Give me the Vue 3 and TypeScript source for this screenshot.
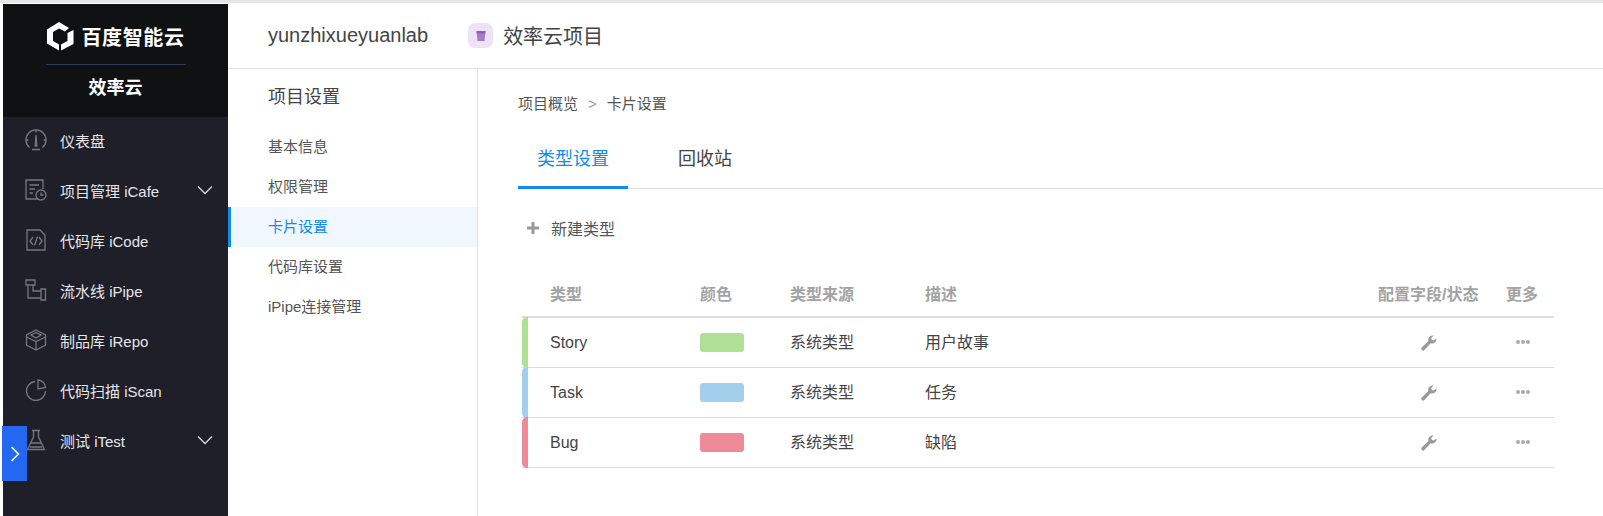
<script setup lang="ts">
interface MenuItem {
  label: string;
  icon: string;
  arrow?: boolean;
}

const menus: MenuItem[] = [
  { label: "仪表盘", icon: "gauge" },
  { label: "项目管理 iCafe", icon: "cafe", arrow: true },
  { label: "代码库 iCode", icon: "code" },
  { label: "流水线 iPipe", icon: "pipe" },
  { label: "制品库 iRepo", icon: "repo" },
  { label: "代码扫描 iScan", icon: "scan" },
  { label: "测试 iTest", icon: "test", arrow: true },
];

const settings = ["基本信息", "权限管理", "卡片设置", "代码库设置", "iPipe连接管理"];

const types = [
  { name: "Story", color: "#b0e096", desc: "用户故事" },
  { name: "Task", color: "#a3cfed", desc: "任务" },
  { name: "Bug", color: "#ef8b98", desc: "缺陷" },
];
</script>

<template>
  <div class="page">
    <aside class="sidebar">
      <div class="brand">
        <div class="logo">
          <svg width="27" height="29" viewBox="0 0 27 29">
            <path d="M12 0 L0 7.5 V21.5 L12 28.5 V22.5 L6 19 V10 L12 6.5 L18 9.5 L22 6 Z" fill="#fff" />
            <path d="M26.5 8 V22 L14 28.5 V22.5 L20.5 19 V11 Z" fill="#fff" />
          </svg>
          <span class="logo-text">百度智能云</span>
        </div>
        <div class="brand-line"></div>
        <div class="brand-name">效率云</div>
      </div>
      <nav class="menu">
        <div v-for="m in menus" :key="m.label" class="menu-item">
          <svg class="menu-icon" width="22" height="22" viewBox="0 0 22 22" fill="none" stroke="#77787d" stroke-width="1.3">
            <template v-if="m.icon === 'gauge'">
              <path d="M4.5 18.5 A10 10 0 1 1 17.5 18.5" />
              <path d="M11 6 L10.2 17 H11.8 Z M7 20.5 H15 M1 11 H3.5 M18.5 11 H21 M11 1 V3.5" />
            </template>
            <template v-else-if="m.icon === 'cafe'">
              <path d="M13 20 H1 V1 H18 V10" />
              <path d="M4.5 6 H14 M4.5 10 H10 M4.5 14 H8" />
              <circle cx="16" cy="16" r="5" />
              <path d="M16 13.5 V16 H18.5" />
            </template>
            <template v-else-if="m.icon === 'code'">
              <path d="M2 1 H15 L20 6 V21 H2 Z" />
              <path d="M8 8 L5 12 L8 16 M14 8 L17 12 L14 16 M12.5 7.5 L9.5 16.5" />
            </template>
            <template v-else-if="m.icon === 'pipe'">
              <path d="M1 1 H10 V6 H1 Z M3 6 V19 H16 M8 6 V12 H16 M16 10 H20.5 V21 H16 Z" />
            </template>
            <template v-else-if="m.icon === 'repo'">
              <path d="M11 1 L20.5 6 V16 L11 21 L1.5 16 V6 Z" />
              <path d="M1.5 8 L11 12.5 L20.5 8 M11 12.5 V21 M6 6 L11 3.5 L16 6 L11 9 Z" />
            </template>
            <template v-else-if="m.icon === 'scan'">
              <path d="M10 2.5 A9.5 9.5 0 1 0 20.5 12" />
              <path d="M13 1 A8 8 0 0 1 20.5 8.5 L13 10 Z" />
            </template>
            <template v-else>
              <path d="M7 1.5 H15 M8.5 1.5 V8 L2.5 20.5 H19.5 L13.5 8 V1.5" />
              <path d="M6 14 H16 M5 18 H17" />
            </template>
          </svg>
          <span class="menu-label">{{ m.label }}</span>
          <svg v-if="m.arrow" class="menu-arrow" width="16" height="10" viewBox="0 0 16 10" fill="none" stroke="#d8d8da" stroke-width="1.3">
            <path d="M1 1.5 L8 8.5 L15 1.5" />
          </svg>
        </div>
      </nav>
      <div class="toggle">
        <svg width="10" height="16" viewBox="0 0 10 16" fill="none" stroke="#fff" stroke-width="1.5">
          <path d="M1.5 1 L8.5 8 L1.5 15" />
        </svg>
      </div>
    </aside>

    <div class="main">
      <header class="topbar">
        <span class="org">yunzhixueyuanlab</span>
        <span class="project-icon">
          <svg width="10" height="12" viewBox="0 0 10 12"><path d="M0.5 1 H9.5 L8.5 11 H1.5 Z" fill="#a77bcb" /><path d="M0.5 1 H9.5 L9.2 3.5 H0.8 Z" fill="#8e5fb8" /></svg>
        </span>
        <span class="project-name">效率云项目</span>
      </header>

      <div class="body">
        <div class="subnav">
          <div class="subnav-title">项目设置</div>
          <div
            v-for="s in settings"
            :key="s"
            class="subnav-item"
            :class="{ active: s === '卡片设置' }"
          >
            {{ s }}
          </div>
        </div>

        <section class="content">
          <div class="crumb">
            <span>项目概览</span>
            <span class="crumb-sep">&gt;</span>
            <span>卡片设置</span>
          </div>
          <div class="tabs">
            <div class="tab active">类型设置</div>
            <div class="tab">回收站</div>
          </div>
          <div class="new-type">
            <svg width="12" height="12" viewBox="0 0 12 12"><path d="M4.5 0 H7.5 V4.5 H12 V7.5 H7.5 V12 H4.5 V7.5 H0 V4.5 H4.5 Z" fill="#999" /></svg>
            <span>新建类型</span>
          </div>

          <div class="table">
            <div class="row head">
              <span>类型</span>
              <span>颜色</span>
              <span>类型来源</span>
              <span>描述</span>
              <span>配置字段/状态</span>
              <span>更多</span>
            </div>
            <div v-for="t in types" :key="t.name" class="row item">
              <i class="bar" :style="{ background: t.color }"></i>
              <span>{{ t.name }}</span>
              <span class="swatch" :style="{ background: t.color }"></span>
              <span>系统类型</span>
              <span>{{ t.desc }}</span>
              <span class="cfg">
                <svg width="16" height="16" viewBox="0 0 16 16">
                  <path d="M15.4 3.4 A4.4 4.4 0 0 1 9.6 8.3 L3.4 15 A1.7 1.7 0 0 1 0.8 12.6 L7.4 6.1 A4.4 4.4 0 0 1 12.6 0.6 L10.2 3.1 L10.8 5 L12.8 5.6 Z" fill="#999" />
                </svg>
              </span>
              <span class="dots"><i></i><i></i><i></i></span>
            </div>
          </div>
        </section>
      </div>
    </div>
  </div>
</template>

<style>
html,
body {
  margin: 0;
  background: #fff;
}
</style>

<style scoped>
.page {
  display: flex;
  height: 516px;
  overflow: hidden;
  box-sizing: border-box;
  border-top: 3px solid #e6e6ea;
  padding-left: 3px;
  background: #fff;
  font-family: "Liberation Sans", "Noto Sans CJK SC", sans-serif;
  color: #333;
  position: relative;
}
.sidebar {
  width: 225px;
  flex: none;
  margin-top: 1px;
  background: #1e1f29;
  color: #e6e6e8;
}
.brand {
  height: 113px;
  box-sizing: border-box;
  background: #101113;
  padding-top: 17px;
  display: flex;
  flex-direction: column;
  align-items: center;
}
.logo {
  display: flex;
  align-items: center;
  gap: 8px;
  height: 30px;
}
.logo-text {
  color: #fff;
  font-size: 20px;
  font-weight: 700;
  letter-spacing: 0.6px;
}
.brand-line {
  width: 140px;
  height: 1px;
  margin-top: 13px;
  background: #2c3a5c;
}
.brand-name {
  margin-top: 8px;
  font-size: 18px;
  font-weight: 700;
  color: #fff;
}
.menu {
  margin-top: -2px;
}
.menu-item {
  height: 50px;
  display: flex;
  align-items: center;
  padding-left: 22px;
  font-size: 15px;
  position: relative;
}
.menu-icon {
  flex: none;
}
.menu-label {
  margin-left: 13px;
}
.menu-arrow {
  position: absolute;
  right: 15px;
  top: 20px;
}
.toggle {
  position: absolute;
  left: 2px;
  top: 423px;
  width: 25px;
  height: 55px;
  background: #2468f2;
  display: flex;
  align-items: center;
  justify-content: center;
}
.main {
  flex: 1;
  min-width: 0;
  display: flex;
  flex-direction: column;
}
.topbar {
  height: 66px;
  flex: none;
  box-sizing: border-box;
  border-bottom: 1px solid #e4e4e4;
  display: flex;
  align-items: center;
  padding-left: 40px;
}
.org {
  font-size: 20px;
  color: #444;
}
.project-icon {
  margin-left: 40px;
  width: 25px;
  height: 25px;
  border-radius: 7px;
  background: #eee3f6;
  display: flex;
  align-items: center;
  justify-content: center;
}
.project-name {
  margin-left: 10px;
  font-size: 20px;
  color: #444;
}
.body {
  flex: 1;
  display: flex;
}
.subnav {
  width: 250px;
  flex: none;
  box-sizing: border-box;
  border-right: 1px solid #e4e4e4;
}
.subnav-title {
  height: 24px;
  padding: 16px 0 0 40px;
  font-size: 18px;
  line-height: 24px;
  color: #444;
  margin-bottom: 18px;
}
.subnav-item {
  height: 40px;
  line-height: 40px;
  padding-left: 40px;
  font-size: 15px;
  color: #555;
}
.subnav-item.active {
  background: #f0f7fe;
  color: #108cee;
  box-shadow: inset 3px 0 0 #108cee;
}
.content {
  flex: 1;
  min-width: 0;
  padding-left: 40px;
}
.crumb {
  margin-top: 25px;
  height: 20px;
  line-height: 20px;
  font-size: 15px;
  color: #555;
  display: flex;
}
.crumb-sep {
  margin: 0 10px;
  color: #999;
}
.tabs {
  margin-top: 21px;
  height: 54px;
  box-sizing: border-box;
  border-bottom: 1px solid #e0e0e0;
  display: flex;
}
.tab {
  width: 110px;
  height: 54px;
  box-sizing: border-box;
  text-align: center;
  line-height: 36px;
  padding-top: 6px;
  font-size: 18px;
  color: #444;
  margin-right: 22px;
}
.tab.active {
  color: #108cee;
  border-bottom: 3px solid #108cee;
}
.new-type {
  margin-top: 27px;
  height: 24px;
  display: flex;
  align-items: center;
  gap: 12px;
  padding-left: 9px;
  font-size: 16px;
  color: #555;
}
.table {
  margin-top: 32px;
  margin-left: 4px;
  width: 1032px;
  font-size: 16px;
  line-height: 20px;
  color: #444;
}
.row {
  display: grid;
  grid-template-columns: 178px 90px 135px 453px 128px 48px;
  align-items: center;
  position: relative;
}
.row > span:first-of-type {
  padding-left: 28px;
}
.head {
  height: 46px;
  border-bottom: 2px solid #ddd;
  box-sizing: border-box;
  font-weight: 700;
  color: #a3a3a3;
  padding-top: 3px;
  padding-bottom: 1px;
}
.item {
  height: 50px;
  box-sizing: border-box;
  border-bottom: 1px solid #ddd;
}
.bar {
  position: absolute;
  left: 0;
  top: -1px;
  bottom: -1px;
  width: 6px;
  border-radius: 5px 0 0 5px;
}
.swatch {
  width: 44px;
  height: 19px;
  border-radius: 3px;
}
.cfg {
  width: 102px;
  display: flex;
  justify-content: center;
}
.dots {
  display: flex;
  gap: 1px;
  padding-left: 10px;
  margin-top: -1px;
}
.dots i {
  width: 4px;
  height: 4px;
  border-radius: 50%;
  background: #aaa;
}
</style>
